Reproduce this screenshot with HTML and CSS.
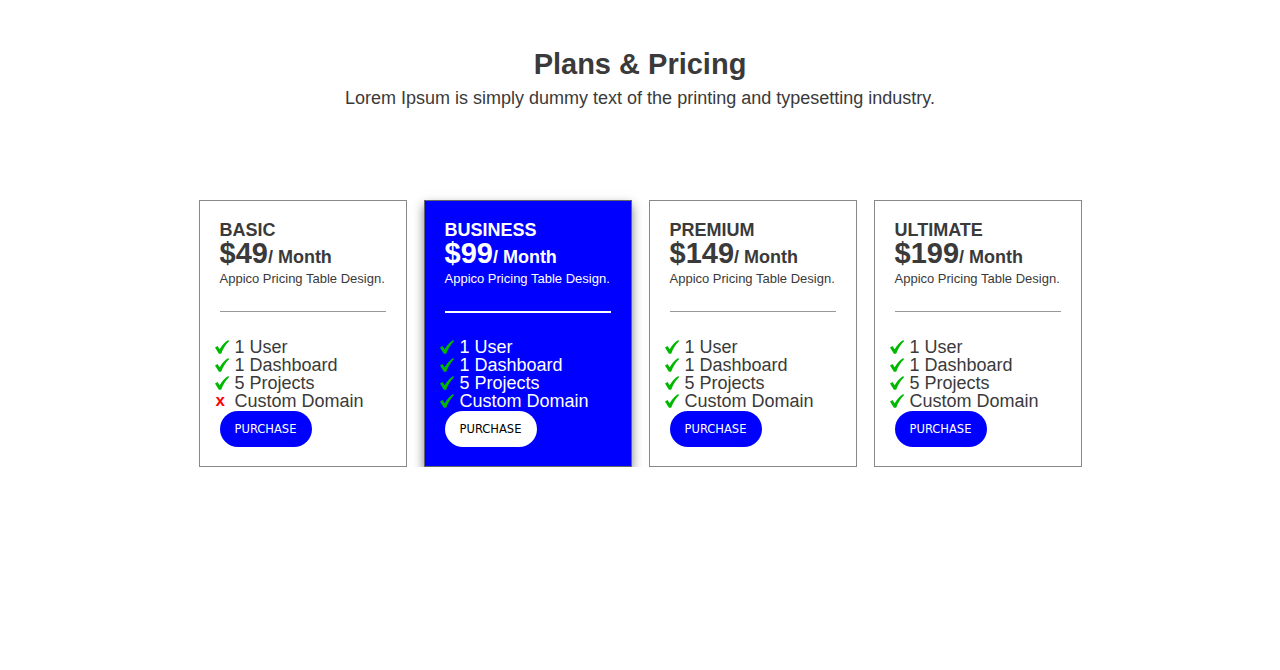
FILE: index.html
```html
<!DOCTYPE html>
<html>
<head>
<meta charset="utf-8">
<link rel="stylesheet" href="styles.css">
</head>
<body>
<header class="head">
  <h1 class="title">Plans &amp; Pricing</h1>
  <p class="subtitle">Lorem Ipsum is simply dummy text of the printing and typesetting industry.</p>
</header>
<main class="plans">
  <section class="card">
    <h2 class="name">BASIC</h2>
    <div class="price"><span class="amount">$49</span>/ Month</div>
    <p class="desc">Appico Pricing Table Design.</p>
    <hr class="rule">
    <ul class="features">
      <li><span class="ico"><svg class="check" viewBox="0 0 14 14"><path d="M0 7.6 L2.5 6 L4.7 9.3 C6.9 5.4 9.7 2.3 13.3 0 L14 1.3 C10.7 4.5 8.1 8.5 6.2 13.8 L3.9 13.8 Z"/></svg></span>1 User</li>
      <li><span class="ico"><svg class="check" viewBox="0 0 14 14"><path d="M0 7.6 L2.5 6 L4.7 9.3 C6.9 5.4 9.7 2.3 13.3 0 L14 1.3 C10.7 4.5 8.1 8.5 6.2 13.8 L3.9 13.8 Z"/></svg></span>1 Dashboard</li>
      <li><span class="ico"><svg class="check" viewBox="0 0 14 14"><path d="M0 7.6 L2.5 6 L4.7 9.3 C6.9 5.4 9.7 2.3 13.3 0 L14 1.3 C10.7 4.5 8.1 8.5 6.2 13.8 L3.9 13.8 Z"/></svg></span>5 Projects</li>
      <li><span class="ico cross">x</span>Custom Domain</li>
    </ul>
    <button class="buy">PURCHASE</button>
  </section>
  <section class="card featured">
    <h2 class="name">BUSINESS</h2>
    <div class="price"><span class="amount">$99</span>/ Month</div>
    <p class="desc">Appico Pricing Table Design.</p>
    <hr class="rule">
    <ul class="features">
      <li><span class="ico"><svg class="check" viewBox="0 0 14 14"><path d="M0 7.6 L2.5 6 L4.7 9.3 C6.9 5.4 9.7 2.3 13.3 0 L14 1.3 C10.7 4.5 8.1 8.5 6.2 13.8 L3.9 13.8 Z"/></svg></span>1 User</li>
      <li><span class="ico"><svg class="check" viewBox="0 0 14 14"><path d="M0 7.6 L2.5 6 L4.7 9.3 C6.9 5.4 9.7 2.3 13.3 0 L14 1.3 C10.7 4.5 8.1 8.5 6.2 13.8 L3.9 13.8 Z"/></svg></span>1 Dashboard</li>
      <li><span class="ico"><svg class="check" viewBox="0 0 14 14"><path d="M0 7.6 L2.5 6 L4.7 9.3 C6.9 5.4 9.7 2.3 13.3 0 L14 1.3 C10.7 4.5 8.1 8.5 6.2 13.8 L3.9 13.8 Z"/></svg></span>5 Projects</li>
      <li><span class="ico"><svg class="check" viewBox="0 0 14 14"><path d="M0 7.6 L2.5 6 L4.7 9.3 C6.9 5.4 9.7 2.3 13.3 0 L14 1.3 C10.7 4.5 8.1 8.5 6.2 13.8 L3.9 13.8 Z"/></svg></span>Custom Domain</li>
    </ul>
    <button class="buy">PURCHASE</button>
  </section>
  <section class="card">
    <h2 class="name">PREMIUM</h2>
    <div class="price"><span class="amount">$149</span>/ Month</div>
    <p class="desc">Appico Pricing Table Design.</p>
    <hr class="rule">
    <ul class="features">
      <li><span class="ico"><svg class="check" viewBox="0 0 14 14"><path d="M0 7.6 L2.5 6 L4.7 9.3 C6.9 5.4 9.7 2.3 13.3 0 L14 1.3 C10.7 4.5 8.1 8.5 6.2 13.8 L3.9 13.8 Z"/></svg></span>1 User</li>
      <li><span class="ico"><svg class="check" viewBox="0 0 14 14"><path d="M0 7.6 L2.5 6 L4.7 9.3 C6.9 5.4 9.7 2.3 13.3 0 L14 1.3 C10.7 4.5 8.1 8.5 6.2 13.8 L3.9 13.8 Z"/></svg></span>1 Dashboard</li>
      <li><span class="ico"><svg class="check" viewBox="0 0 14 14"><path d="M0 7.6 L2.5 6 L4.7 9.3 C6.9 5.4 9.7 2.3 13.3 0 L14 1.3 C10.7 4.5 8.1 8.5 6.2 13.8 L3.9 13.8 Z"/></svg></span>5 Projects</li>
      <li><span class="ico"><svg class="check" viewBox="0 0 14 14"><path d="M0 7.6 L2.5 6 L4.7 9.3 C6.9 5.4 9.7 2.3 13.3 0 L14 1.3 C10.7 4.5 8.1 8.5 6.2 13.8 L3.9 13.8 Z"/></svg></span>Custom Domain</li>
    </ul>
    <button class="buy">PURCHASE</button>
  </section>
  <section class="card">
    <h2 class="name">ULTIMATE</h2>
    <div class="price"><span class="amount">$199</span>/ Month</div>
    <p class="desc">Appico Pricing Table Design.</p>
    <hr class="rule">
    <ul class="features">
      <li><span class="ico"><svg class="check" viewBox="0 0 14 14"><path d="M0 7.6 L2.5 6 L4.7 9.3 C6.9 5.4 9.7 2.3 13.3 0 L14 1.3 C10.7 4.5 8.1 8.5 6.2 13.8 L3.9 13.8 Z"/></svg></span>1 User</li>
      <li><span class="ico"><svg class="check" viewBox="0 0 14 14"><path d="M0 7.6 L2.5 6 L4.7 9.3 C6.9 5.4 9.7 2.3 13.3 0 L14 1.3 C10.7 4.5 8.1 8.5 6.2 13.8 L3.9 13.8 Z"/></svg></span>1 Dashboard</li>
      <li><span class="ico"><svg class="check" viewBox="0 0 14 14"><path d="M0 7.6 L2.5 6 L4.7 9.3 C6.9 5.4 9.7 2.3 13.3 0 L14 1.3 C10.7 4.5 8.1 8.5 6.2 13.8 L3.9 13.8 Z"/></svg></span>5 Projects</li>
      <li><span class="ico"><svg class="check" viewBox="0 0 14 14"><path d="M0 7.6 L2.5 6 L4.7 9.3 C6.9 5.4 9.7 2.3 13.3 0 L14 1.3 C10.7 4.5 8.1 8.5 6.2 13.8 L3.9 13.8 Z"/></svg></span>Custom Domain</li>
    </ul>
    <button class="buy">PURCHASE</button>
  </section>
</main>
</body>
</html>
```

FILE: styles.css
```css
* { box-sizing: border-box; }
html, body { margin: 0; padding: 0; background: #fff; }
body {
  font-family: "Liberation Sans", Arial, sans-serif;
  color: #3a3a3a;
}
.head {
  text-align: center;
  padding-top: 47px;
}
.title {
  margin: 0;
  font-size: 29px;
  line-height: 34px;
  font-weight: bold;
}
.subtitle {
  margin: 6px 0 0;
  font-size: 18px;
  line-height: 22px;
}
.plans {
  display: flex;
  justify-content: center;
  gap: 17px;
  margin-top: 91px;
}
.card {
  width: 208px;
  height: 267px;
  border: 1px solid #888;
  padding: 20px;
  background: #fff;
}
.name {
  margin: 0;
  font-size: 18px;
  line-height: 18px;
  font-weight: bold;
}
.price {
  font-size: 18px;
  font-weight: bold;
  line-height: 28px;
  margin-top: 0;
}
.amount {
  font-size: 29px;
}
.desc {
  margin: 0;
  font-size: 13px;
  line-height: 16px;
}
.rule {
  margin: 24px 0 0;
  border: 0;
  border-top: 1px solid #999;
  height: 0;
}
.features {
  list-style: none;
  margin: 26px 0 0 -5px;
  padding: 0;
  font-size: 18px;
  line-height: 18px;
}
.features li {
  display: flex;
  align-items: center;
}
.ico {
  width: 20px;
  display: inline-flex;
  align-items: center;
}
.check {
  width: 14px;
  height: 14px;
  fill: #00b800;
}
.cross {
  color: #ff0000;
  font-weight: bold;
  font-size: 17px;
  padding-left: 1px;
}
.buy {
  margin-top: 1px;
  width: 92px;
  height: 36px;
  border: 0;
  border-radius: 18px;
  background: #0000ff;
  color: #fff;
  font-family: "DejaVu Sans", sans-serif;
  font-size: 11.5px;
  padding: 0;
}
.featured {
  background: #0000ff;
  color: #fff;
  border-color: #666;
  box-shadow: 0 5px 10px rgba(0, 0, 0, 0.5);
}
.featured .rule {
  border-top: 2px solid #fff;
}
.featured .features {
  margin-top: 25px;
}
.featured .buy {
  background: #fff;
  color: #000;
}
```
